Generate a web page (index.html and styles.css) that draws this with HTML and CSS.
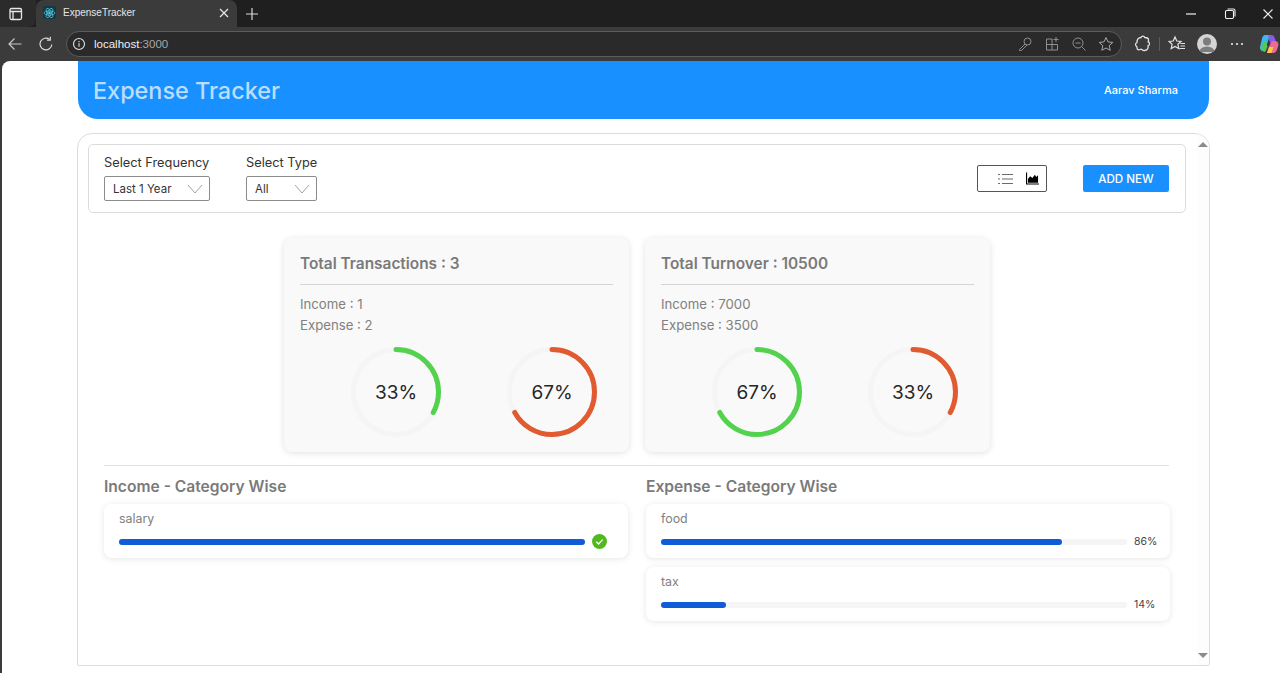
FILE: index.html
```html
<!DOCTYPE html>
<html lang="en">
<head>
    <meta charset="UTF-8">
    <meta name="viewport" content="width=device-width, initial-scale=1.0">
    <title>ExpenseTracker</title>
    <link rel="stylesheet" href="styles.css">
</head>
<body>
    <!-- Browser tabs -->
    <div class="tabstrip">
        <div class="tab-actions">
            <svg width="16" height="16" viewBox="0 0 16 16" fill="none" stroke="#e8e8e8" stroke-width="1.3"><rect x="2" y="2.500" width="11.500" height="11" rx="1.500"/><path d="M2 5.500h11.500M5 5.500v8"/></svg>
        </div>
        <div class="tab">
            <span class="tab-icon">
                <svg width="16" height="16" viewBox="0 0 16 16" fill="none" stroke="#5fd3ec" stroke-width=".8"><ellipse cx="8" cy="8" rx="6.500" ry="2.600"/><ellipse cx="8" cy="8" rx="6.500" ry="2.600" transform="rotate(60 8 8)"/><ellipse cx="8" cy="8" rx="6.500" ry="2.600" transform="rotate(120 8 8)"/><circle cx="8" cy="8" r="1.200" fill="#5fd3ec"/></svg>
            </span>
            <span class="tab-title">ExpenseTracker</span>
            <svg class="tab-close" width="10" height="10" viewBox="0 0 10 10" stroke="#e8e8e8" stroke-width="1.200"><path d="M1 1l8 8M9 1L1 9"/></svg>
        </div>
        <svg class="new-tab" width="14" height="14" viewBox="0 0 14 14" stroke="#d8d8d8" stroke-width="1.200"><path d="M7 1v12M1 7h12"/></svg>
        <div class="window-controls">
            <svg width="12" height="12" viewBox="0 0 12 12" stroke="#f0f0f0" stroke-width="1.200"><path d="M1 6h10"/></svg>
            <svg width="12" height="12" viewBox="0 0 12 12" fill="none" stroke="#f0f0f0" stroke-width="1.100"><rect x="1.500" y="2.500" width="8" height="8" rx="1.200"/><path d="M3.500 1h6a1.500 1.500 0 0 1 1.500 1.500v6"/></svg>
            <svg width="12" height="12" viewBox="0 0 12 12" stroke="#f0f0f0" stroke-width="1.100"><path d="M1.500 1.500l9 9M10.500 1.500l-9 9"/></svg>
        </div>
    </div>

    <!-- Browser toolbar -->
    <div class="toolbar">
        <svg class="nav-back" width="16" height="16" viewBox="0 0 16 16" fill="none" stroke="#c8c8c8" stroke-width="1.200"><path d="M14.500 8H2M7.500 2.500L2 8l5.500 5.500"/></svg>
        <svg class="nav-reload" width="16" height="16" viewBox="0 0 16 16" fill="none" stroke="#dcdcdc" stroke-width="1.200"><path d="M13.800 8.500A5.900 5.900 0 1 1 11.600 3.400"/><path d="M12.300 .8v3.400H9"/></svg>
        <div class="address-bar">
            <svg width="14" height="14" viewBox="0 0 14 14" fill="none" stroke="#e4e4e4" stroke-width="1.100"><circle cx="7" cy="7" r="5.500"/><path d="M7 6.300v3.500M7 4v1.200"/></svg>
            <span class="url">localhost<span class="url-port">:3000</span></span>
            <div class="address-icons">
                <svg width="16" height="16" viewBox="0 0 16 16" fill="none" stroke="#8f8f8f" stroke-width="1"><circle cx="10.500" cy="5.500" r="3.500"/><path d="M8 8l-5.500 5.500v1h2L10 9"/></svg>
                <svg width="16" height="16" viewBox="0 0 16 16" fill="none" stroke="#8f8f8f" stroke-width="1"><path d="M8 3H2.500v11h11V8.500H2.500M8 3v11"/><path d="M12 1v5M9.500 3.500h5"/></svg>
                <svg width="16" height="16" viewBox="0 0 16 16" fill="none" stroke="#8f8f8f" stroke-width="1"><circle cx="7" cy="7" r="5"/><path d="M4.500 7h5M10.500 10.500l4 4"/></svg>
                <svg width="16" height="16" viewBox="0 0 16 16" fill="none" stroke="#a8a8a8" stroke-width="1"><path d="M8 1.500l2 4.400 4.800.5-3.600 3.200 1 4.700L8 12l-4.200 2.300 1-4.700L1.200 6.400 6 5.900z"/></svg>
            </div>
        </div>
        <div class="toolbar-icons">
            <svg width="18" height="18" viewBox="0 0 18 18" fill="none" stroke="#e4e4e4" stroke-width="1.300"><path d="M7 2.500a2 2 0 0 1 3.800 0c2 0 3.700.5 3.700 2.500 0 1-.3 1.400-.3 1.900 1.700.3 1.800 3.600-.2 3.900.6 2-.5 4.700-3.500 4.700-2 .3-2.500-1.400-3.500-1.400s-1.700 1.500-3 .5C2.500 14 3.500 12.500 2.800 11.800 1.300 10.800 1 8.300 3 7.500 2.700 4.500 4.500 2.500 7 2.500z"/></svg>
            <span class="toolbar-sep"></span>
            <svg width="18" height="18" viewBox="0 0 18 18" fill="none" stroke="#e4e4e4" stroke-width="1.200"><path d="M7 2l1.800 4 4.200.4-3.100 2.900.9 4.300L7 11.500l-3.800 2.100.9-4.300L1 6.400 5.200 6z"/><path d="M12.500 8.500H17M12.500 11H17M11.500 13.500H17"/></svg>
            <span class="avatar">
                <svg width="20" height="20" viewBox="0 0 20 20" fill="#7d7d7d"><circle cx="10" cy="7.500" r="4"/><path d="M2.500 18a7.500 5.500 0 0 1 15 0z"/></svg>
            </span>
            <svg class="more" width="14" height="4" viewBox="0 0 14 4" fill="#e8e8e8"><circle cx="2" cy="2" r="1.100"/><circle cx="7" cy="2" r="1.100"/><circle cx="12" cy="2" r="1.100"/></svg>
            <svg class="copilot" width="20" height="20" viewBox="0 0 20 20">
                <path d="M6 1h5L8 10l-2 7c-3 1-5.500-1-5-4L3 4.500C3.500 2.500 4.500 1 6 1z" fill="#3fb6e8"/>
                <path d="M3 12.500c1-3 2-4.500 3.500-6l2 6-2 5c-2 1-4-1-3.500-5z" fill="#57c84d"/>
                <path d="M9 1h3.500c1.500 0 2.500 1 3 2.500l3 9-6-1-2-4.500z" fill="#8b5be8"/>
                <path d="M8 19l2.500-7.500 2.500-4.500h3c2.500 0 3.800 2 3.300 4.500l-1.300 4c-.6 2-2 3.500-4 3.500z" fill="#ef6a8f"/>
                <path d="M8 19l2-6h4.500l-2 6z" fill="#f7c948"/>
            </svg>
        </div>
    </div>

    <div class="viewport">
        <header class="app-header">
            <h1>Expense Tracker</h1>
            <span class="user-name">Aarav Sharma</span>
        </header>

        <main class="app-panel">
            <div class="panel-body">
                <!-- Filters -->
                <div class="filters">
                    <div class="filter-group">
                        <div class="filter">
                            <label>Select Frequency</label>
                            <div class="select select-frequency">
                                <span>Last 1 Year</span>
                                <svg width="16" height="10" viewBox="0 0 16 10" fill="none" stroke="#a3a3a3"><path d="M1 1l7 8 7-8"/></svg>
                            </div>
                        </div>
                        <div class="filter">
                            <label>Select Type</label>
                            <div class="select select-type">
                                <span>All</span>
                                <svg width="16" height="10" viewBox="0 0 16 10" fill="none" stroke="#a3a3a3"><path d="M1 1l7 8 7-8"/></svg>
                            </div>
                        </div>
                    </div>
                    <div class="filter-actions">
                        <div class="view-switch">
                            <svg width="15" height="12" viewBox="0 0 15 12" stroke="#6b6b6b"><path d="M0 1.500h2M4 1.500h11M0 6h2M4 6h11M0 10.500h2M4 10.500h11"/></svg>
                            <svg width="13" height="13" viewBox="0 0 14 13"><path d="M.6 0v12.400H14" fill="none" stroke="#000" stroke-width="1.200"/><path d="M2 11V7l2.500-3 2.500 2 2.500-3.500L11 5l2-2v8z" fill="#000"/></svg>
                        </div>
                        <button class="add-button">ADD NEW</button>
                    </div>
                </div>

                <!-- Totals -->
                <div class="stats">
                    <section class="stat-card">
                        <h2>Total Transactions : 3</h2>
                        <p class="stat-line stat-first">Income : 1</p>
                        <p class="stat-line">Expense : 2</p>
                        <div class="rings">
                            <div class="ring">
                                <svg width="90" height="90" viewBox="0 0 90 90" fill="none" stroke-width="5"><circle cx="45" cy="45" r="42.500" stroke="#f5f5f5"/><circle cx="45" cy="45" r="42.500" stroke="#52d24d" stroke-linecap="round" pathLength="100" stroke-dasharray="33 100" transform="rotate(-90 45 45)"/></svg>
                                <span>33%</span>
                            </div>
                            <div class="ring">
                                <svg width="90" height="90" viewBox="0 0 90 90" fill="none" stroke-width="5"><circle cx="45" cy="45" r="42.500" stroke="#f5f5f5"/><circle cx="45" cy="45" r="42.500" stroke="#e15b30" stroke-linecap="round" pathLength="100" stroke-dasharray="67 100" transform="rotate(-90 45 45)"/></svg>
                                <span>67%</span>
                            </div>
                        </div>
                    </section>
                    <section class="stat-card">
                        <h2>Total Turnover : 10500</h2>
                        <p class="stat-line stat-first">Income : 7000</p>
                        <p class="stat-line">Expense : 3500</p>
                        <div class="rings">
                            <div class="ring">
                                <svg width="90" height="90" viewBox="0 0 90 90" fill="none" stroke-width="5"><circle cx="45" cy="45" r="42.500" stroke="#f5f5f5"/><circle cx="45" cy="45" r="42.500" stroke="#52d24d" stroke-linecap="round" pathLength="100" stroke-dasharray="67 100" transform="rotate(-90 45 45)"/></svg>
                                <span>67%</span>
                            </div>
                            <div class="ring">
                                <svg width="90" height="90" viewBox="0 0 90 90" fill="none" stroke-width="5"><circle cx="45" cy="45" r="42.500" stroke="#f5f5f5"/><circle cx="45" cy="45" r="42.500" stroke="#e15b30" stroke-linecap="round" pathLength="100" stroke-dasharray="33 100" transform="rotate(-90 45 45)"/></svg>
                                <span>33%</span>
                            </div>
                        </div>
                    </section>
                </div>

                <hr class="section-rule">

                <!-- Category breakdown -->
                <div class="categories">
                    <div class="category-col">
                        <h3>Income - Category Wise</h3>
                        <div class="category-card">
                            <div class="category-name">salary</div>
                            <div class="progress-row">
                                <div class="progress-track"><div class="progress-fill" style="width: 100%"></div></div>
                                <svg class="progress-done" width="15" height="15" viewBox="0 0 15 15"><circle cx="7.500" cy="7.500" r="7.500" fill="#52b81f"/><path d="M4.300 7.700l2.300 2.300 4-4.400" fill="none" stroke="#fff" stroke-width="1.300"/></svg>
                            </div>
                        </div>
                    </div>
                    <div class="category-col">
                        <h3>Expense - Category Wise</h3>
                        <div class="category-card">
                            <div class="category-name">food</div>
                            <div class="progress-row">
                                <div class="progress-track"><div class="progress-fill" style="width: 86%"></div></div>
                                <span class="progress-pct">86%</span>
                            </div>
                        </div>
                        <div class="category-card">
                            <div class="category-name">tax</div>
                            <div class="progress-row">
                                <div class="progress-track"><div class="progress-fill" style="width: 14%"></div></div>
                                <span class="progress-pct">14%</span>
                            </div>
                        </div>
                    </div>
                </div>
            </div>

            <div class="scrollbar">
                <span class="scroll-up"></span>
                <span class="scroll-down"></span>
            </div>
        </main>
    </div>
</body>
</html>
```

FILE: styles.css
```css
* {
    box-sizing: border-box;
}
html, body {
    height: 100%;
}
body {
    margin: 0;
    display: flex;
    flex-direction: column;
    height: 673px;
    overflow: hidden;
    background-color: #3b3b3b;
    font-family: Inter, "Open Sans", sans-serif;
    color: #7a7a7a;
}

/* browser chrome */
.tabstrip {
    display: flex;
    align-items: stretch;
    height: 27px;
    background-color: #1f1f1f;
}
.tab-actions {
    display: flex;
    align-items: center;
    justify-content: center;
    width: 36px;
    padding-right: 4px;
    background-color: #2b2b2b;
    border-bottom-right-radius: 8px;
}
.tab {
    display: flex;
    align-items: center;
    width: 201px;
    padding: 0 8px 2px 7px;
    background-color: #3b3b3b;
    border-radius: 8px 8px 0 0;
}
.tab-icon {
    display: flex;
    align-items: center;
    justify-content: center;
    width: 13px;
    height: 13px;
    background-color: #123a45;
    border-radius: 2px;
    flex-shrink: 0;
}
.tab-title {
    margin-left: 7px;
    font-family: "Liberation Sans", sans-serif;
    font-size: 10px;
    color: #e6e6e6;
    flex: 1;
}
.new-tab {
    align-self: center;
    margin-left: 8px;
}
.window-controls {
    display: flex;
    align-items: center;
    gap: 26.500px;
    margin-left: auto;
    padding-right: 6px;
}
.toolbar {
    display: flex;
    align-items: center;
    height: 34px;
    background-color: #3b3b3b;
    padding-left: 7px;
}
.nav-back {
    margin-right: 15px;
}
.nav-reload {
    margin-right: 12px;
}
.address-bar {
    display: flex;
    align-items: center;
    flex-shrink: 0;
    width: 1056px;
    height: 26px;
    padding: 0 7px 0 5px;
    background-color: #2a2a2a;
    border: 1px solid #5c5c5c;
    border-radius: 13px;
}
.url {
    margin-left: 8px;
    font-family: "Liberation Sans", sans-serif;
    font-size: 11.500px;
    color: #f0f0f0;
}
.url-port {
    color: #a8a8a8;
}
.address-icons {
    display: flex;
    align-items: center;
    gap: 11px;
    margin-left: auto;
}
.toolbar-icons {
    display: flex;
    align-items: center;
    margin-left: 12px;
}
.toolbar-sep {
    width: 1px;
    height: 14px;
    margin: 0 8px 0 7px;
    background-color: #5c5c5c;
}
.avatar {
    display: flex;
    align-items: center;
    justify-content: center;
    width: 20px;
    height: 20px;
    margin-left: 11px;
    background-color: #d4d4d4;
    border-radius: 50%;
    overflow: hidden;
}
.more {
    margin-left: 13px;
}
.copilot {
    margin-left: 15px;
}

/* page */
.viewport {
    flex: 1;
    margin-left: 2px;
    padding: 0 70px 7px 75px;
    display: flex;
    flex-direction: column;
    background-color: #fff;
    border-top-left-radius: 8px;
    min-height: 0;
}
.app-header {
    display: flex;
    align-items: center;
    justify-content: space-between;
    height: 58px;
    margin: 0 1px;
    padding: 0 31px 0 15px;
    background-color: #1890ff;
    border-radius: 0 0 20px 20px;
    flex-shrink: 0;
}
.app-header h1 {
    margin: 0;
    font-size: 23.400px;
    font-weight: 500;
    color: #b9deff;
}
.user-name {
    font-size: 11px;
    font-weight: 500;
    color: #fff;
}
.app-panel {
    display: flex;
    flex: 1;
    margin-top: 14px;
    border: 1px solid #dcdcdc;
    border-radius: 15px 15px 2px 2px;
    min-height: 0;
    overflow: hidden;
}
.panel-body {
    flex: 1;
    padding: 10px 11px 0 10px;
    min-width: 0;
}
.scrollbar {
    display: flex;
    flex-direction: column;
    align-items: center;
    justify-content: space-between;
    width: 12px;
    padding: 8px 0 7px;
    background-color: #fdfdfd;
}
.scroll-up, .scroll-down {
    width: 0;
    height: 0;
    border-left: 5px solid transparent;
    border-right: 5px solid transparent;
}
.scroll-up {
    border-bottom: 5px solid #8c8c8c;
}
.scroll-down {
    border-top: 5px solid #8c8c8c;
}

/* filters */
.filters {
    display: flex;
    align-items: center;
    justify-content: space-between;
    height: 69px;
    padding: 0 16px 0 15px;
    border: 1px solid #dcdcdc;
    border-radius: 5px;
}
.filter-group {
    display: flex;
    gap: 36px;
    padding-bottom: 2px;
}
.filter label {
    display: block;
    margin-bottom: 5px;
    font-size: 12.800px;
    line-height: 17px;
    color: #333;
}
.select {
    display: flex;
    align-items: center;
    justify-content: space-between;
    height: 25px;
    padding: 0 6px 0 8px;
    border: 1px solid #8c8c8c;
    border-radius: 2px;
    font-size: 11.500px;
    color: #333;
}
.select-frequency {
    width: 106px;
}
.select-type {
    width: 71px;
}
.filter-actions {
    display: flex;
    align-items: center;
    gap: 36px;
}
.view-switch {
    display: flex;
    align-items: center;
    gap: 13px;
    width: 70px;
    height: 27px;
    padding-left: 20px;
    border: 1px solid #555;
    border-radius: 2px;
}
.add-button {
    width: 86px;
    height: 27px;
    background-color: #1890ff;
    border: 0;
    border-radius: 2px;
    font-family: inherit;
    font-size: 11.600px;
    font-weight: 500;
    color: #fff;
}

/* stat cards */
.stats {
    display: flex;
    justify-content: center;
    gap: 16px;
    margin-top: 25px;
}
.stat-card {
    width: 345px;
    height: 214px;
    padding: 15px 16px 0;
    background-color: #f9f9f9;
    border-radius: 8px;
    box-shadow: 0 1px 6px rgba(0, 0, 0, 0.12);
}
.stat-card h2 {
    margin: 0 0 9px;
    padding-bottom: 10px;
    border-bottom: 1px solid #d4d4d4;
    font-size: 15.400px;
    line-height: 21px;
    font-weight: 600;
    color: #7a7a7a;
}
.stat-line {
    margin: 0;
    font-size: 13.200px;
    line-height: 21px;
    color: #808080;
}
.rings {
    display: flex;
    gap: 66px;
    margin-top: 11px;
    padding-left: 51px;
}
.ring {
    position: relative;
    width: 90px;
    height: 90px;
}
.ring svg {
    display: block;
}
.ring span {
    position: absolute;
    inset: 0;
    display: flex;
    align-items: center;
    justify-content: center;
    font-size: 19px;
    color: #262626;
}

/* categories */
.section-rule {
    margin: 13px 17px 0 16px;
    border: 0;
    border-top: 1px solid #e0e0e0;
}
.categories {
    display: grid;
    grid-template-columns: 524px 524px;
    gap: 18px;
    margin-top: 11px;
    padding-left: 16px;
}
.category-col h3 {
    margin: 0 0 7px;
    font-size: 15.600px;
    line-height: 20px;
    font-weight: 600;
    color: #7a7a7a;
}
.category-card {
    height: 54px;
    margin-bottom: 9px;
    padding: 7px 12px 0 15px;
    background-color: #fff;
    border-radius: 8px;
    box-shadow: 0 1px 6px rgba(0, 0, 0, 0.1);
}
.category-name {
    font-size: 12.400px;
    line-height: 16px;
    color: #808080;
}
.progress-row {
    display: flex;
    align-items: center;
    gap: 7px;
    margin-top: 7px;
    height: 15px;
}
.progress-track {
    flex: 1;
    height: 6px;
    background-color: #f5f5f5;
    border-radius: 3px;
}
.progress-fill {
    height: 100%;
    background-color: #0f5bd8;
    border-radius: 3px;
}
.progress-done {
    flex-shrink: 0;
    margin-right: 9px;
}
.progress-pct {
    width: 24px;
    font-size: 10.500px;
    color: #444;
}
```
